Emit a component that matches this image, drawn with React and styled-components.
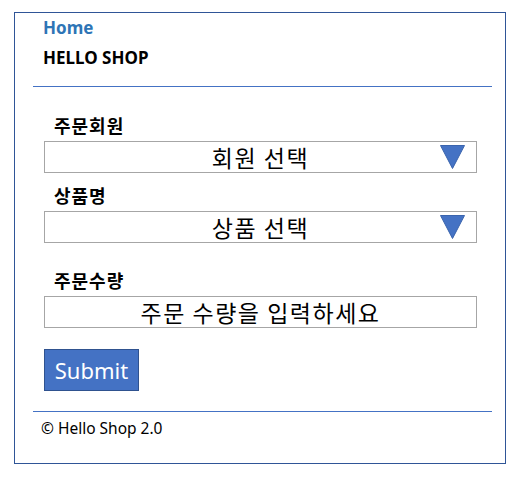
import styled, { createGlobalStyle } from "styled-components";

const GlobalStyle = createGlobalStyle`
  body {
    margin: 0;
    background: #ffffff;
    font-family: "Noto Sans", "Noto Sans CJK KR", sans-serif;
    color: #000000;
  }
`;

const Frame = styled.div`
  box-sizing: border-box;
  width: 492px;
  height: 452px;
  margin: 12px 0 0 14px;
  border: 1px solid #2f5597;
  display: flex;
  flex-direction: column;
`;

const Header = styled.header`
  padding: 5px 0 0 28px;
`;

const HomeLink = styled.a`
  display: block;
  font-size: 17px;
  font-weight: 700;
  line-height: 20px;
  color: #2e75b6;
  text-decoration: none;
`;

const Brand = styled.div`
  margin-top: 10px;
  font-size: 17px;
  font-weight: 700;
  line-height: 20px;
`;

const Divider = styled.hr`
  margin: ${(p) => p.$top}px 13px 0 18px;
  border: 0;
  height: 1px;
  background: #4472c4;
`;

const Form = styled.form`
  display: flex;
  flex-direction: column;
  align-items: flex-start;
  padding: 0 28px 0 29px;
`;

const Label = styled.label`
  display: block;
  margin-top: ${(p) => p.$top}px;
  margin-bottom: 5px;
  padding-left: 10px;
  font-family: "Noto Sans CJK KR", sans-serif;
  font-size: 18px;
  font-weight: 700;
  letter-spacing: 1px;
  line-height: 22px;
`;

const Field = styled.div`
  box-sizing: border-box;
  align-self: stretch;
  height: 32px;
  border: 1px solid #a6a6a6;
  display: grid;
  grid-template-columns: 1fr auto 1fr;
  align-items: center;
  font-family: "Noto Sans CJK KR", sans-serif;
  font-size: 23px;
  letter-spacing: 1.5px;
  line-height: 30px;
`;

const FieldText = styled.span`
  grid-column: 2;
  white-space: nowrap;
`;

const Arrow = styled.svg`
  grid-column: 3;
  justify-self: end;
  margin-right: 11px;
  display: block;
`;

const SubmitButton = styled.button`
  box-sizing: border-box;
  margin-top: 21px;
  width: 95px;
  height: 42px;
  padding: 0;
  border: 1px solid #2f528f;
  background: #4472c4;
  color: #ffffff;
  font-family: "Noto Sans", sans-serif;
  font-size: 22px;
  line-height: 40px;
`;

const Footer = styled.footer`
  margin-top: 6px;
  padding-left: 26px;
  font-size: 15.5px;
  line-height: 20px;
`;

const DropArrow = () => (
  <Arrow width="25" height="24" viewBox="0 0 25 24">
    <polygon points="0.5,0.5 24.5,0.5 12.5,23.5" fill="#4472c4" stroke="#3a64ad" strokeWidth="1" />
  </Arrow>
);

const App = () => {
  return (
    <>
      <GlobalStyle />
      <Frame>
        <Header>
          <HomeLink href="#">Home</HomeLink>
          <Brand>HELLO SHOP</Brand>
        </Header>
        <Divider $top={18} />
        <Form onSubmit={(e) => e.preventDefault()}>
          <Label $top={27}>주문회원</Label>
          <Field>
            <FieldText>회원 선택</FieldText>
            <DropArrow />
          </Field>
          <Label $top={11}>상품명</Label>
          <Field>
            <FieldText>상품 선택</FieldText>
            <DropArrow />
          </Field>
          <Label $top={26}>주문수량</Label>
          <Field>
            <FieldText>주문 수량을 입력하세요</FieldText>
          </Field>
          <SubmitButton type="submit">Submit</SubmitButton>
        </Form>
        <Divider $top={20} />
        <Footer>© Hello Shop 2.0</Footer>
      </Frame>
    </>
  );
};

export default App;
